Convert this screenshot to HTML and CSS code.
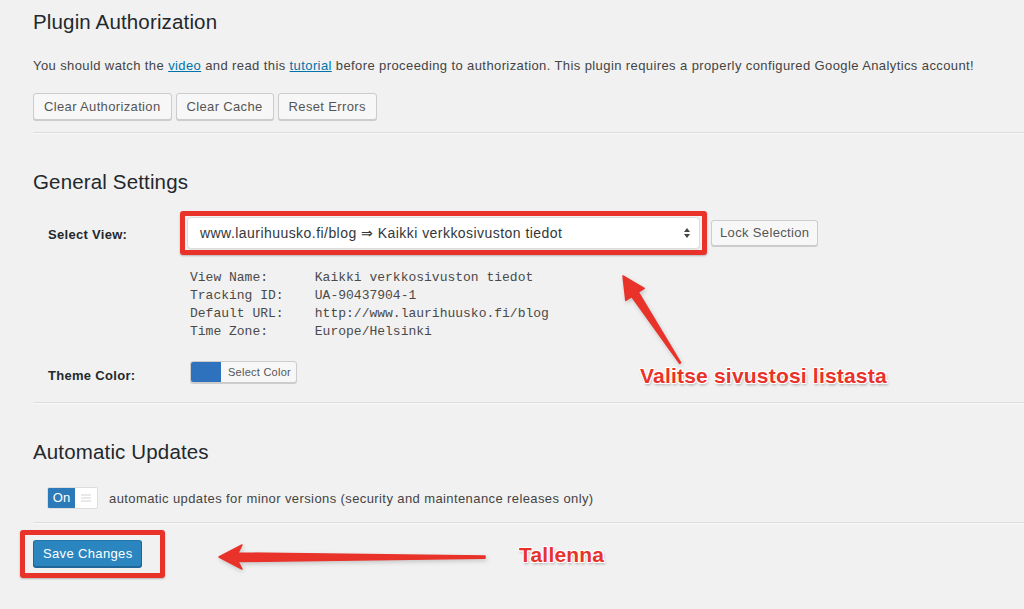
FILE: index.html
```html
<!DOCTYPE html>
<html lang="en">
<head>
<meta charset="utf-8">
<title>Analytics Settings</title>
<link rel="stylesheet" href="styles.css">
</head>
<body>
<div class="wrap">
  <h2 class="section-title">Plugin Authorization</h2>
  <p class="intro">You should watch the <a href="#">video</a> and read this <a href="#">tutorial</a> before proceeding to authorization. This plugin requires a properly configured Google Analytics account!</p>
  <div class="btn-row">
    <button class="button">Clear Authorization</button>
    <button class="button">Clear Cache</button>
    <button class="button">Reset Errors</button>
  </div>
  <hr class="divider">

  <h2 class="section-title spaced">General Settings</h2>
  <div class="form-grid">
    <div class="field-label label-view">Select View:</div>
    <div class="select-line">
      <div class="highlight">
        <div class="select">
          <span>www.laurihuusko.fi/blog ⇒ Kaikki verkkosivuston tiedot</span>
          <svg class="select-arrows" width="8" height="12" viewBox="0 0 8 12"><path d="M4 1 L7 5 H1 Z M4 11 L1 7 H7 Z" fill="#444"/></svg>
        </div>
      </div>
      <button class="button button-small">Lock Selection</button>
    </div>
    <div></div>
    <pre class="view-details">View Name:      Kaikki verkkosivuston tiedot
Tracking ID:    UA-90437904-1
Default URL:    http://www.laurihuusko.fi/blog
Time Zone:      Europe/Helsinki</pre>
    <div class="field-label label-color">Theme Color:</div>
    <div class="color-cell">
      <div class="color-picker">
        <span class="swatch"></span>
        <span class="picker-text">Select Color</span>
      </div>
    </div>
  </div>
  <hr class="divider divider-mid">

  <h2 class="section-title spaced">Automatic Updates</h2>
  <div class="toggle-row">
    <div class="toggle">
      <span class="toggle-on">On</span>
      <span class="toggle-off">
        <svg width="10" height="10" viewBox="0 0 10 10"><path d="M0 2h10M0 5h10M0 8h10" stroke="#d4d4d4" stroke-width="1.2"/></svg>
      </span>
    </div>
    <span>automatic updates for minor versions (security and maintenance releases only)</span>
  </div>
  <hr class="divider divider-low">

  <div class="save-frame">
    <button class="button button-primary">Save Changes</button>
  </div>

  <svg class="annotations" width="1024" height="609" viewBox="0 0 1024 609">
    <g fill="#e8322a" stroke="#e8322a" stroke-width="1.5" stroke-linejoin="round">
      <polygon points="623,276 644.2,288.4 638.3,292.2 680.6,362.7 679.6,363.4 631.7,296.6 625.8,300.4"/>
      <polygon points="219,557 242,545 238,553 485,556 485,558.2 238,561.5 242,569"/>
    </g>
  </svg>
  <div class="callout callout-view">Valitse sivustosi listasta</div>
  <div class="callout callout-save">Tallenna</div>
</div>
</body>
</html>
```

FILE: styles.css
```css
body {
  margin: 0;
  background: #f1f1f1;
  color: #444;
  font-family: "Liberation Sans", Arial, sans-serif;
  font-size: 13px;
  letter-spacing: 0.4px;
}

.wrap {
  position: relative;
  box-sizing: border-box;
  min-height: 609px;
  padding: 9px 0 0 33px;
  overflow: hidden;
}

.section-title {
  margin: 0;
  font-size: 20.5px;
  line-height: 26px;
  font-weight: 400;
  letter-spacing: 0.15px;
  color: #23282d;
}

.section-title.spaced {
  margin-top: 35px;
}

.intro {
  margin: 22px 0 0;
  line-height: 18px;
}

.intro a {
  color: #0073aa;
}

.btn-row {
  display: flex;
  gap: 4px;
  margin-top: 18px;
}

.button {
  box-sizing: border-box;
  height: 27px;
  padding: 0 10px;
  border: 1px solid #ccc;
  border-radius: 3px;
  background: #f7f7f7;
  box-shadow: 0 1px 0 #ccc;
  color: #555;
  font: 13px/25px "Liberation Sans", Arial, sans-serif;
  letter-spacing: 0.35px;
  white-space: nowrap;
}

.button-small {
  height: 26px;
  line-height: 24px;
  padding: 0 8px;
}

.button-primary {
  padding: 0 9px;
  background: #2b86c0;
  border-color: #2475aa #1f6797 #1f6797;
  box-shadow: 0 1px 0 #1f6797;
  color: #fff;
}

.divider {
  margin: 12px 0 0;
  border: 0;
  border-top: 1px solid #dcdcdc;
  border-bottom: 1px solid #fafafa;
}

.divider-mid {
  margin-top: 19px;
}

.divider-low {
  margin-top: 13px;
}

/* settings table */
.form-grid {
  display: grid;
  grid-template-columns: 142px auto;
  justify-content: start;
  margin-top: 16px;
  padding-left: 15px;
}

.field-label {
  font-weight: bold;
  color: #23282d;
  line-height: 18px;
  letter-spacing: 0.3px;
}

.label-view {
  align-self: center;
  padding-top: 3px;
}

.label-color {
  align-self: start;
  margin-top: 28px;
  line-height: 14px;
}

.select-line {
  display: flex;
  align-items: center;
  gap: 4px;
}

.highlight {
  margin-left: -10px;
  padding: 1px 2px;
  border: 5px solid #e8322a;
  border-radius: 3px;
  box-shadow: 0 1px 2px rgba(0, 0, 0, 0.25);
}

.select {
  box-sizing: border-box;
  display: flex;
  align-items: center;
  justify-content: space-between;
  width: 513px;
  height: 32px;
  padding: 0 8px 0 12px;
  border: 1px solid #ddd;
  border-radius: 4px;
  background: #fff;
  box-shadow: 0 1px 1px rgba(0, 0, 0, 0.06);
  color: #32373c;
  font-size: 14px;
  letter-spacing: 0.45px;
}

.view-details {
  margin: 14px 0 0;
  font: 13px/18px "Liberation Mono", "Courier New", monospace;
  letter-spacing: 0;
  color: #4a4a4a;
}

.color-cell {
  margin-top: 20px;
}

.color-picker {
  display: flex;
  width: 107px;
  height: 22px;
  box-sizing: border-box;
  border: 1px solid #ccc;
  border-radius: 3px;
  background: #f7f7f7;
  box-shadow: 0 1px 0 #ccc;
  overflow: hidden;
}

.swatch {
  width: 30px;
  background: #2e72be;
}

.picker-text {
  padding: 0 5px 0 7px;
  font-size: 11px;
  line-height: 20px;
  letter-spacing: 0.25px;
  color: #555;
  white-space: nowrap;
}

/* auto-update toggle */
.toggle-row {
  display: flex;
  align-items: center;
  gap: 11px;
  margin-top: 22px;
  padding-left: 14px;
}

.toggle {
  display: flex;
  height: 22px;
  box-sizing: border-box;
  border: 1px solid #ddd;
  border-radius: 2px;
  background: #fff;
  overflow: hidden;
}

.toggle-on {
  width: 27px;
  background: #2c7ab9;
  color: #fff;
  text-align: center;
  line-height: 20px;
  letter-spacing: 0;
}

.toggle-off {
  display: flex;
  align-items: center;
  justify-content: center;
  width: 22px;
}

.save-frame {
  display: flex;
  width: max-content;
  margin: 6px 0 0 -13px;
  padding: 5px 18px 6px 8px;
  border: 5px solid #e8322a;
  border-radius: 3px;
  box-shadow: 0 1px 2px rgba(0, 0, 0, 0.25);
}

/* red annotation layer drawn over the page */
.annotations {
  position: absolute;
  left: 0;
  top: 0;
  pointer-events: none;
  filter: drop-shadow(1px 2px 2px rgba(0, 0, 0, 0.18));
}

.callout {
  position: absolute;
  font-family: "Liberation Sans", Arial, sans-serif;
  font-weight: bold;
  font-size: 21px;
  line-height: 21px;
  letter-spacing: 0.2px;
  color: #e8322a;
  white-space: nowrap;
  text-shadow:
    1px 0 0 #fff, -1px 0 0 #fff, 0 1px 0 #fff, 0 -1px 0 #fff,
    1px 1px 0 #fff, -1px -1px 0 #fff, 1px -1px 0 #fff, -1px 1px 0 #fff,
    1px 2px 3px rgba(0, 0, 0, 0.35);
}

.callout-view {
  left: 640px;
  top: 365px;
}

.callout-save {
  left: 519px;
  top: 544px;
}
```
